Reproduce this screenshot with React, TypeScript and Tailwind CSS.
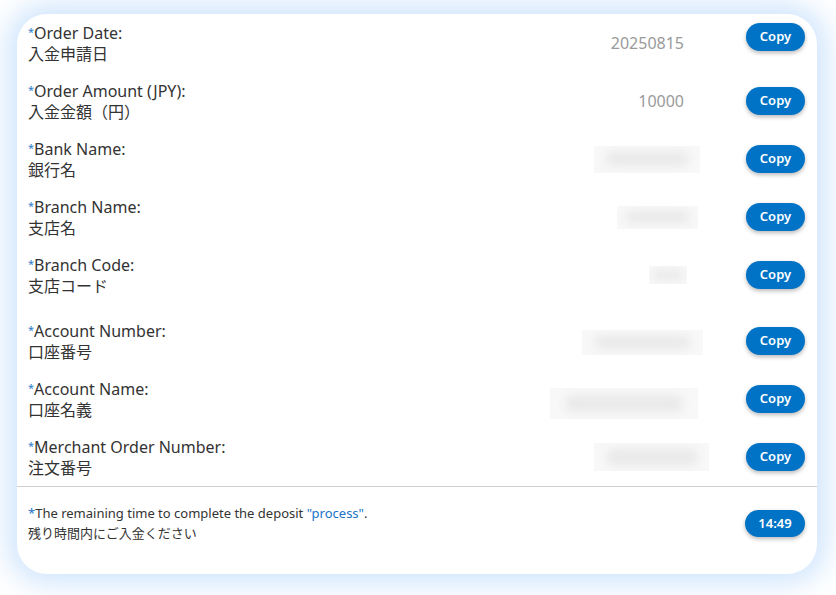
import React from "react";

const font = { fontFamily: '"Noto Sans", "Noto Sans CJK JP", sans-serif' };

type Row = {
  en: string;
  ja: string;
  value?: string;
  blob?: { w: number; h: number; mr: number; dy?: number };
  top?: boolean;
  extra?: boolean;
};

const rows: Row[] = [
  { en: "Order Date:", ja: "入金申請日", value: "20250815", top: true },
  { en: "Order Amount (JPY):", ja: "入金金額（円）", value: "10000" },
  { en: "Bank Name:", ja: "銀行名", blob: { w: 106, h: 27, mr: 46 } },
  { en: "Branch Name:", ja: "支店名", blob: { w: 81, h: 23, mr: 48 } },
  { en: "Branch Code:", ja: "支店コード", blob: { w: 38, h: 18, mr: 59 } },
  { en: "Account Number:", ja: "口座番号", blob: { w: 121, h: 25, mr: 43, dy: 1.5 }, extra: true },
  { en: "Account Name:", ja: "口座名義", blob: { w: 148, h: 31, mr: 48, dy: 4.5 } },
  { en: "Merchant Order Number:", ja: "注文番号", blob: { w: 115, h: 28, mr: 37 } },
];

function Button({ children, top }: { children: React.ReactNode; top?: boolean }) {
  return (
    <button
      className={
        "w-[59px] h-[28px] rounded-full bg-[#0073c6] text-white text-[13px] font-semibold flex items-center justify-center shadow-[0_2px_4px_rgba(0,0,0,0.28)] shrink-0 " +
        (top ? "self-start mt-[2px]" : "mt-[-1px]")
      }
    >
      {children}
    </button>
  );
}

export default function App() {
  return (
    <div className="w-[836px] h-[595px] bg-white overflow-hidden pt-[14px] pl-[17px]" style={font}>
      <div className="w-[800px] h-[560px] bg-white rounded-[30px] shadow-[0_0_28px_10px_rgba(120,180,245,0.35)] flex flex-col pt-[7px]">
        <div className="flex flex-col gap-[14px] pl-[11px] pr-[12px]">
          {rows.map((r) => (
            <div key={r.en} className={"flex items-center h-[44px] " + (r.extra ? "mt-[8px]" : "")}>
              <div className="flex-1 text-[#333] text-[16px]">
                <div className="h-[22px] leading-[22px] whitespace-nowrap">
                  <span className="text-[11px] text-[#2a7bc8] align-[3px]">*</span>
                  {r.en}
                </div>
                <div className="h-[22px] leading-[22px] whitespace-nowrap">{r.ja}</div>
              </div>
              {r.value && (
                <div className="text-[16px] leading-[22px] text-[#9a9a9a] mr-[62px] mt-[-1px]">{r.value}</div>
              )}
              {r.blob && (
                <div
                  className="bg-[#f8f8f8] flex items-center justify-center overflow-hidden"
                  style={{ width: r.blob.w, height: r.blob.h, marginRight: r.blob.mr, marginTop: (r.blob.dy ?? 0) * 2 }}
                >
                  <div className="w-[80%] h-[55%] bg-[#e9e9e9] rounded-full blur-[5px]" />
                </div>
              )}
              <Button top={r.top}>Copy</Button>
            </div>
          ))}
        </div>
        <div className="h-px bg-[#cfcfcf] mt-[7px] shrink-0" />
        <div className="flex items-center pl-[11px] pr-[12px] pt-[16px]">
          <div className="flex-1 text-[13px] text-[#333]">
            <div className="h-[20px] leading-[20px]">
              <span className="text-[#1a73c8]">*</span>The remaining time to complete the deposit{" "}
              <span className="text-[#1a73c8]">"process"</span>.
            </div>
            <div className="h-[20px] leading-[20px]">残り時間内にご入金ください</div>
          </div>
          <div className="w-[60px] h-[27px] rounded-full bg-[#0073c6] text-white text-[13px] font-semibold flex items-center justify-center shadow-[0_2px_4px_rgba(0,0,0,0.28)] mt-[1px]">
            14:49
          </div>
        </div>
      </div>
    </div>
  );
}
